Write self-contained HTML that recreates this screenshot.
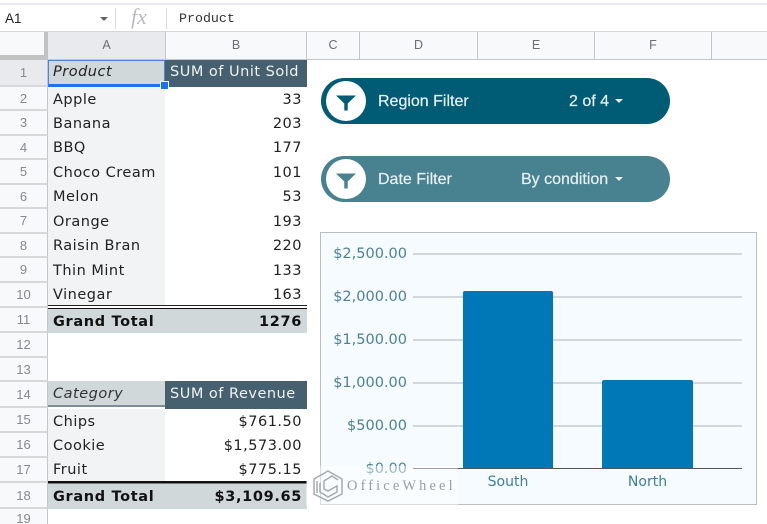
<!DOCTYPE html>
<html><head><meta charset="utf-8"><style>
html,body{margin:0;padding:0;background:#fff}
#p{position:relative;width:767px;height:524px;overflow:hidden;background:#fff;font-family:"DejaVu Sans",sans-serif}
#p div{position:absolute;box-sizing:border-box;white-space:nowrap}
.ch{top:32px;height:28px;background:#f8f9fa;border-right:1px solid #c4c7c9;border-bottom:1px solid #c4c7c9;text-align:center;font:12.5px/27px "Liberation Sans",sans-serif;color:#6a6e73}
.rh{left:0;width:48px;background:#f8f9fa;border-bottom:2px solid #d6d8da;border-right:1px solid #c4c7c9;text-align:center;font:13px "Liberation Sans",sans-serif;color:#85898d}
.t{font-size:14.5px;letter-spacing:.5px;line-height:24px;color:#222;left:53px}
.v{font-size:14.5px;letter-spacing:.5px;line-height:24px;color:#222;right:465px;text-align:right}
.b{font-weight:bold;color:#111;letter-spacing:.65px}
.y{font-size:14.500px;line-height:18px;color:#4d8296;right:360px;text-align:right}
.g{left:413px;width:329px;height:1.500px;background:#d3d7da}
.l{font:16px/20px "Liberation Sans",sans-serif;color:#e8f0f3;-webkit-text-stroke:.2px #e8f0f3}
</style></head><body><div id="p">
<!-- top bar -->
<div style="left:0;top:3px;width:767px;height:2px;background:#e8eaed"></div>
<div style="left:0;top:31px;width:767px;height:2px;background:#d4d6d8"></div>
<div style="left:5px;top:10px;font:13.5px/17px 'Liberation Sans',sans-serif;color:#222">A1</div>
<div style="left:100px;top:17px;width:0;height:0;border:4px solid transparent;border-top:4px solid #5f6368;border-bottom:0"></div>
<div style="left:115px;top:8px;width:1px;height:21px;background:#dadce0"></div>
<div style="left:131px;top:4px;font:italic 22px/26px 'Liberation Serif',serif;color:#b9bbbe">fx</div>
<div style="left:166px;top:8px;width:1px;height:21px;background:#dadce0"></div>
<div style="left:179px;top:10px;font:13.3px/17px 'Liberation Mono',monospace;color:#333">Product</div>
<!-- column headers -->
<div class="ch" style="left:0;width:48px;border-right:4px solid #c0c2c3;border-bottom:5px solid #c0c2c3"></div>
<div class="ch" style="left:48px;width:118px;background:#e8eaed">A</div>
<div class="ch" style="left:166px;width:141px">B</div>
<div class="ch" style="left:307px;width:53px">C</div>
<div class="ch" style="left:360px;width:118px">D</div>
<div class="ch" style="left:478px;width:117px">E</div>
<div class="ch" style="left:595px;width:117px">F</div>
<div class="ch" style="left:712px;width:55px;border-right:0"></div>
<!-- row headers -->
<div class="rh" style="top:60px;height:27px;line-height:25px;background:#e8eaed">1</div>
<div class="rh" style="top:87px;height:24px;line-height:23px">2</div>
<div class="rh" style="top:111px;height:25px;line-height:23px">3</div>
<div class="rh" style="top:136px;height:24px;line-height:23px">4</div>
<div class="rh" style="top:160px;height:25px;line-height:23px">5</div>
<div class="rh" style="top:185px;height:24px;line-height:23px">6</div>
<div class="rh" style="top:209px;height:25px;line-height:23px">7</div>
<div class="rh" style="top:234px;height:24px;line-height:23px">8</div>
<div class="rh" style="top:258px;height:25px;line-height:23px">9</div>
<div class="rh" style="top:283px;height:25px;line-height:23px">10</div>
<div class="rh" style="top:308px;height:25px;line-height:24px">11</div>
<div class="rh" style="top:333px;height:25px;line-height:23px">12</div>
<div class="rh" style="top:358px;height:24px;line-height:23px">13</div>
<div class="rh" style="top:382px;height:26px;line-height:25px">14</div>
<div class="rh" style="top:408px;height:25px;line-height:23px">15</div>
<div class="rh" style="top:433px;height:25px;line-height:23px">16</div>
<div class="rh" style="top:458px;height:25px;line-height:23px">17</div>
<div class="rh" style="top:483px;height:26px;line-height:25px">18</div>
<div class="rh" style="top:509px;height:15px;line-height:19px;border-bottom:0">19</div>
<!-- pivot 1 -->
<div style="left:48px;top:87px;width:117px;height:221px;background:#f1f3f5"></div>
<div style="left:48px;top:60px;width:117px;height:27px;background:#d0d8da;border:1.500px solid #4a86d8;border-bottom:3px solid #1a73e8"></div>
<div style="left:165px;top:60px;width:142px;height:27px;background:#46606f"></div>
<div style="left:160px;top:81px;width:9px;height:9px;background:#1a73e8;border:1px solid #fff"></div>
<div class="t" style="top:59.500px;font-style:italic;line-height:24px">Product</div>
<div class="t" style="left:170px;top:59.500px;color:#eef2f4">SUM of Unit Sold</div>
<div class="t" style="top:88px">Apple</div><div class="v" style="top:88px">33</div>
<div class="t" style="top:112px">Banana</div><div class="v" style="top:112px">203</div>
<div class="t" style="top:136px">BBQ</div><div class="v" style="top:136px">177</div>
<div class="t" style="top:161px">Choco Cream</div><div class="v" style="top:161px">101</div>
<div class="t" style="top:185px">Melon</div><div class="v" style="top:185px">53</div>
<div class="t" style="top:210px">Orange</div><div class="v" style="top:210px">193</div>
<div class="t" style="top:234px">Raisin Bran</div><div class="v" style="top:234px">220</div>
<div class="t" style="top:259px">Thin Mint</div><div class="v" style="top:259px">133</div>
<div class="t" style="top:283px">Vinegar</div><div class="v" style="top:283px">163</div>
<div style="left:48px;top:305px;width:259px;height:28px;background:#d0d8da;border-top:1px solid #222"></div>
<div style="left:48px;top:306px;width:259px;height:2px;background:#fff"></div>
<div style="left:48px;top:308px;width:259px;height:1px;background:#111"></div>
<div class="t b" style="top:310px">Grand Total</div><div class="v b" style="top:310px">1276</div>
<!-- pivot 2 -->
<div style="left:48px;top:381px;width:117px;height:26px;background:#d0d8da;border-bottom:2px solid #7d8e98"></div>
<div style="left:165px;top:381px;width:142px;height:28px;background:#46606f"></div>
<div class="t" style="top:382px;font-style:italic;color:#333">Category</div>
<div class="t" style="left:170px;top:382px;color:#eef2f4">SUM of Revenue</div>
<div style="left:48px;top:409px;width:117px;height:73px;background:#f1f3f5"></div>
<div class="t" style="top:410px">Chips</div><div class="v" style="top:410px">$761.50</div>
<div class="t" style="top:434px">Cookie</div><div class="v" style="top:434px">$1,573.00</div>
<div class="t" style="top:458px">Fruit</div><div class="v" style="top:458px">$775.15</div>
<div style="left:48px;top:481px;width:259px;height:2px;background:#111"></div>
<div style="left:48px;top:483px;width:259px;height:26px;background:#d0d8da;border-top:1px solid #777"></div>
<div class="t b" style="top:485px">Grand Total</div><div class="v b" style="top:485px">$3,109.65</div>
<!-- pills -->
<div style="left:320.500px;top:78px;width:349px;height:46px;border-radius:23px;background:#005b74"></div>
<div style="left:326px;top:81px;width:40px;height:40px;border-radius:50%;background:#fff"></div>
<svg style="position:absolute;left:0;top:0" width="767" height="524"><path d="M336 95.500H356L347.700 103.500V110.500H344.300V103.500Z" fill="#005b74"/></svg>
<div class="l" style="left:378px;top:91.500px">Region Filter</div>
<div class="l" style="left:569px;top:91.500px">2 of 4</div>
<div style="left:615px;top:99px;width:0;height:0;border:4.500px solid transparent;border-top:4px solid #e8f0f3;border-bottom:0"></div>
<div style="left:320.500px;top:156px;width:349px;height:46px;border-radius:23px;background:#48818f"></div>
<div style="left:326px;top:159px;width:40px;height:40px;border-radius:50%;background:#fff"></div>
<svg style="position:absolute;left:0;top:0" width="767" height="524"><path d="M336 173.500H356L347.700 181.500V188.500H344.300V181.500Z" fill="#48818f"/></svg>
<div class="l" style="left:378px;top:169.500px">Date Filter</div>
<div class="l" style="left:521px;top:169.500px">By condition</div>
<div style="left:615px;top:177px;width:0;height:0;border:4.500px solid transparent;border-top:4px solid #e8f0f3;border-bottom:0"></div>
<!-- chart -->
<div style="left:320px;top:232px;width:437px;height:273px;background:#f5fbff;border:1.500px solid #bcbfc1"></div>
<div class="g" style="top:253px"></div><div class="g" style="top:296px"></div><div class="g" style="top:339px"></div><div class="g" style="top:382px"></div><div class="g" style="top:425px"></div>
<div style="left:413px;top:468px;width:329px;height:1px;background:#555"></div>
<div class="y" style="top:245px">$2,500.00</div><div class="y" style="top:288px">$2,000.00</div><div class="y" style="top:331px">$1,500.00</div><div class="y" style="top:374px">$1,000.00</div><div class="y" style="top:417px">$500.00</div><div class="y" style="top:460px">$0.00</div>
<div style="left:463px;top:291px;width:90px;height:177px;background:#0077b6;border-radius:2px 2px 0 0"></div>
<div style="left:602px;top:380px;width:91px;height:88px;background:#0077b6;border-radius:2px 2px 0 0"></div>
<div style="left:463px;top:473px;width:90px;text-align:center;font-size:14px;line-height:18px;color:#3f7f96">South</div>
<div style="left:602px;top:473px;width:91px;text-align:center;font-size:14px;line-height:18px;color:#3f7f96">North</div>
<!-- watermark -->
<div style="left:306px;top:466px;width:152px;height:40px;background:rgba(255,255,255,.45)"></div>
<svg style="position:absolute;left:312px;top:469px" width="32" height="34" viewBox="0 0 32 34" fill="none" stroke="#a6abaf" stroke-width="1.500"><path d="M16 2L30 10V25L16 32L2 25V10Z"/><path d="M8 14V23L16 28L25 23V17L16 22L12 20V12L20 7L26 11"/><path d="M5 12V24"/></svg>
<div style="left:347px;top:476px;font:14.500px/20px 'Liberation Serif',serif;letter-spacing:3.100px;color:#9a9ea2">OfficeWheel</div>
</div></body></html>
